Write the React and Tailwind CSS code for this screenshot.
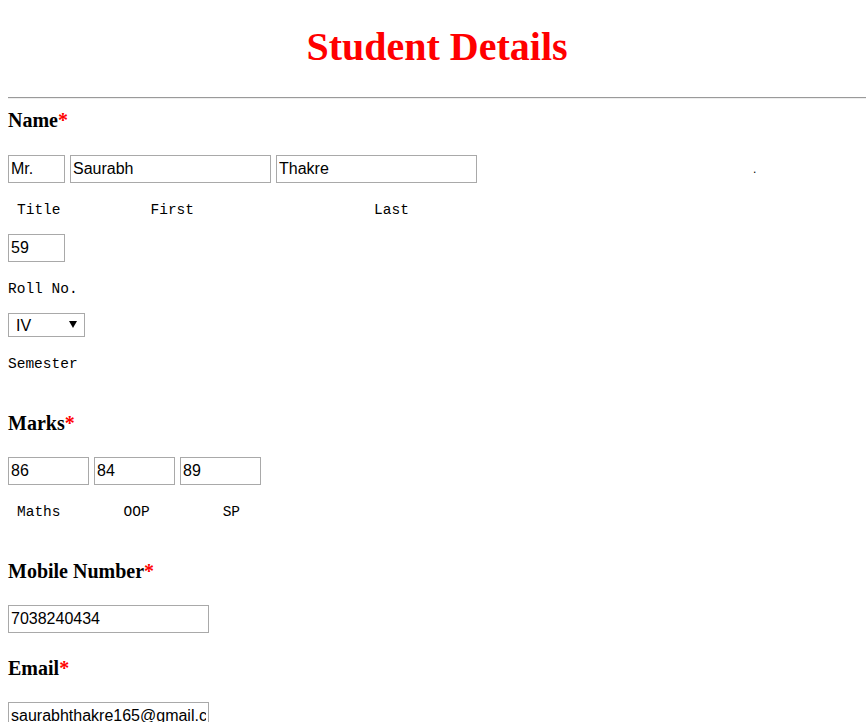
import React, { useState } from 'react';

const serif = "font-['Liberation_Serif','Times_New_Roman',serif]";
const mono = "font-['Liberation_Mono','Courier_New',monospace] text-[14.5px] leading-[17px] text-black whitespace-pre";
const inputCls = "block h-[28px] border border-[#a9a9a9] px-[2px] text-[16px] text-black font-['Liberation_Sans',Arial,sans-serif] outline-none bg-white";

function Heading({ children, className }) {
    return (
        <div className={`${serif} text-[20px] leading-[23px] font-bold text-black ${className}`}>
            {children}
            <span className="text-[#ff0000]">*</span>
        </div>
    );
}

export default function App() {
    const [title, setTitle] = useState('Mr.');
    const [first, setFirst] = useState('Saurabh');
    const [last, setLast] = useState('Thakre');
    const [roll, setRoll] = useState('59');
    const [sem, setSem] = useState('IV');
    const [maths, setMaths] = useState('86');
    const [oop, setOop] = useState('84');
    const [sp, setSp] = useState('89');
    const [mobile, setMobile] = useState('7038240434');
    const [email, setEmail] = useState('saurabhthakre165@gmail.com');

    return (
        <div className="min-h-[722px] bg-white pl-2 overflow-hidden">
            <h1 className={`${serif} pt-[24px] text-center text-[40px] leading-[46px] font-bold text-[#ff0000]`}>
                Student Details
            </h1>
            <div className="mt-[27px] h-[2px] border-t border-[#9a9a9a] border-b border-b-[#eeeeee]" />

            <Heading className="mt-[10px]">Name</Heading>
            <div className="mt-[23px] flex items-center gap-[5px]">
                <input className={`${inputCls} w-[57px]`} value={title} onChange={(e) => setTitle(e.target.value)} />
                <input className={`${inputCls} w-[201px]`} value={first} onChange={(e) => setFirst(e.target.value)} />
                <input className={`${inputCls} w-[201px]`} value={last} onChange={(e) => setLast(e.target.value)} />
                <span className="ml-[271px] text-[12px] text-black font-['Liberation_Sans',sans-serif]">.</span>
            </div>
            <div className={`${mono} mt-[19px] flex`}>
                <span className="ml-[9px]">Title</span>
                <span className="ml-[90px]">First</span>
                <span className="ml-[180px]">Last</span>
            </div>

            <input className={`${inputCls} mt-[15px] w-[57px]`} value={roll} onChange={(e) => setRoll(e.target.value)} />
            <div className={`${mono} mt-[19px]`}>Roll No.</div>

            <div className="relative mt-[15px] w-[77px] h-[24px]">
                <select
                    value={sem}
                    onChange={(e) => setSem(e.target.value)}
                    className="appearance-none w-full h-full border border-[#a9a9a9] pl-[7px] text-[16px] text-black font-['Liberation_Sans',Arial,sans-serif] bg-white outline-none"
                >
                    <option>I</option>
                    <option>II</option>
                    <option>III</option>
                    <option>IV</option>
                    <option>V</option>
                    <option>VI</option>
                    <option>VII</option>
                    <option>VIII</option>
                </select>
                <svg className="pointer-events-none absolute left-[61px] top-[8px]" width="8" height="7" viewBox="0 0 8 7">
                    <path d="M0 0 H8 L4 7 Z" fill="#000" />
                </svg>
            </div>
            <div className={`${mono} mt-[19px]`}>Semester</div>

            <Heading className="mt-[39px]">Marks</Heading>
            <div className="mt-[22px] flex gap-[5px]">
                <input className={`${inputCls} w-[81px]`} value={maths} onChange={(e) => setMaths(e.target.value)} />
                <input className={`${inputCls} w-[81px]`} value={oop} onChange={(e) => setOop(e.target.value)} />
                <input className={`${inputCls} w-[81px]`} value={sp} onChange={(e) => setSp(e.target.value)} />
            </div>
            <div className={`${mono} mt-[19px] flex`}>
                <span className="ml-[9px]">Maths</span>
                <span className="ml-[63px]">OOP</span>
                <span className="ml-[73px]">SP</span>
            </div>

            <Heading className="mt-[39px]">Mobile Number</Heading>
            <input className={`${inputCls} mt-[22px] w-[201px]`} value={mobile} onChange={(e) => setMobile(e.target.value)} />

            <Heading className="mt-[24px]">Email</Heading>
            <input className={`${inputCls} mt-[22px] w-[201px]`} value={email} onChange={(e) => setEmail(e.target.value)} />
        </div>
    );
}
